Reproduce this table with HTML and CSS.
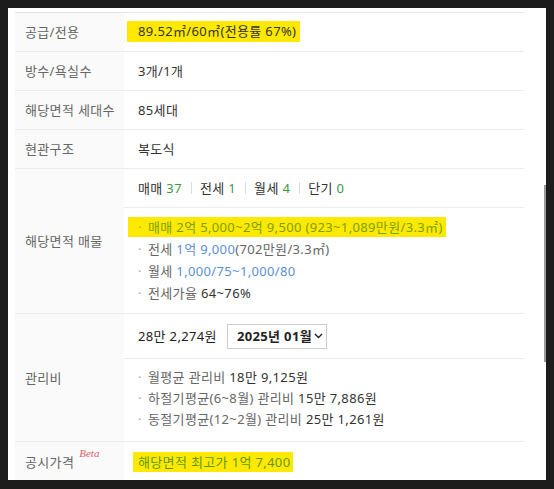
FILE: index.html
```html
<!DOCTYPE html>
<html lang="ko">
<head>
<meta charset="utf-8">
<link rel="stylesheet" href="styles.css">
</head>
<body>
<div class="panel">
  <table class="info">
    <tr>
      <th>공급/전용</th>
      <td><span class="hl hl-area">89.52㎡/60㎡(전용률 67%)</span></td>
    </tr>
    <tr>
      <th>방수/욕실수</th>
      <td>3개/1개</td>
    </tr>
    <tr>
      <th>해당면적 세대수</th>
      <td>85세대</td>
    </tr>
    <tr>
      <th>현관구조</th>
      <td>복도식</td>
    </tr>
    <tr>
      <th>해당면적 매물</th>
      <td class="multi">
        <div class="sub counts">
          <span>매매 <em class="g">37</em></span><i class="sep"></i>
          <span>전세 <em class="g">1</em></span><i class="sep"></i>
          <span>월세 <em class="g">4</em></span><i class="sep"></i>
          <span>단기 <em class="g">0</em></span>
        </div>
        <ul class="list deals">
          <li><span class="hl hl-deal"><span class="dot">·</span>매매 2억 5,000~2억 9,500 (923~1,089만원/3.3㎡)</span></li>
          <li><span class="dot">·</span>전세 <span class="b">1억 9,000</span>(702만원/3.3㎡)</li>
          <li><span class="dot">·</span>월세 <span class="b">1,000/75~1,000/80</span></li>
          <li><span class="dot">·</span>전세가율 <span class="dk">64~76%</span></li>
        </ul>
      </td>
    </tr>
    <tr>
      <th>관리비</th>
      <td class="multi">
        <div class="sub fee">
          <span class="fee-total">28만 2,274원</span>
          <span class="select">2025년 01월<svg class="chev" width="9" height="6" viewBox="0 0 9 6"><path d="M1 1 L4.5 4.5 L8 1" fill="none" stroke="#222" stroke-width="1.4"/></svg></span>
        </div>
        <ul class="list fees">
          <li><span class="dot">·</span>월평균 관리비 <span class="dk">18만 9,125원</span></li>
          <li><span class="dot">·</span>하절기평균(6~8월) 관리비 <span class="dk">15만 7,886원</span></li>
          <li><span class="dot">·</span>동절기평균(12~2월) 관리비 <span class="dk">25만 1,261원</span></li>
        </ul>
      </td>
    </tr>
    <tr class="last">
      <th>공시가격<sup class="beta">Beta</sup></th>
      <td><span class="hl hl-price">해당면적 최고가 1억 7,400</span></td>
    </tr>
  </table>
  <div class="thumb"></div>
</div>
</body>
</html>
```

FILE: styles.css
```css
html, body {
  margin: 0;
  padding: 0;
}
body {
  background: #1c1c1c;
  font-family: "Noto Sans", "Noto Sans CJK KR", sans-serif;
  font-size: 13px;
  letter-spacing: 0.35px;
  color: #333;
  height: 489px;
  overflow: hidden;
}
.panel {
  position: relative;
  margin: 8px 0 0 8px;
  width: 538px;
  height: 472px;
  background: #fff;
  box-sizing: border-box;
  padding: 4px 0 0 7px;
  overflow: hidden;
}
.info {
  border-collapse: collapse;
  width: 509px;
  border-top: 1px solid #e6e6e6;
}
.info tr {
  border-bottom: 1px solid #ececec;
}
.info th {
  width: 99px;
  height: 38px;
  padding: 0 0 0 10px;
  background: #fafafa;
  color: #666;
  font-weight: normal;
  text-align: left;
  vertical-align: middle;
  white-space: nowrap;
  line-height: 20px;
}
.info td {
  padding: 0 0 0 14px;
  height: 38px;
  vertical-align: middle;
  line-height: 20px;
  color: #333;
}
.info td.multi {
  padding: 0;
}
.info tr.last th,
.info tr.last td {
  height: 40px;
}
.sub {
  display: flex;
  align-items: center;
  padding-left: 14px;
  border-bottom: 1px solid #ececec;
}
.counts {
  height: 38px;
}
.counts em {
  font-style: normal;
}
.g {
  color: #3a9a44;
}
.b {
  color: #5b8fd4;
}
.dk {
  color: #333;
}
.sep {
  display: inline-block;
  width: 1px;
  height: 12px;
  background: #dcdcdc;
  margin: 0 8px 0 9px;
}
.list {
  list-style: none;
  margin: 0;
  padding: 0 0 0 14px;
  color: #666;
}
.deals {
  padding-top: 8px;
  padding-bottom: 9px;
}
.deals li {
  line-height: 22px;
  height: 22px;
}
.fees {
  padding-top: 8px;
  padding-bottom: 11px;
}
.fees li {
  line-height: 21px;
  height: 21px;
}
.dot {
  display: inline-block;
  width: 10px;
  color: #aaa;
}
.hl {
  background: #ffe900;
  display: inline-block;
}
.hl-area {
  margin-left: -11px;
  padding: 0 4px 0 11px;
  line-height: 21px;
  position: relative;
  top: -1px;
  color: #333;
}
.hl-deal {
  margin-left: -10px;
  padding: 0 3px 0 10px;
  line-height: 20px;
  color: #79a000;
}
.hl-deal .dot {
  color: #b5b000;
}
.hl-price {
  margin-left: -5px;
  padding: 0 3px 0 5px;
  line-height: 20px;
  color: #5f9a10;
}
.fee {
  height: 44px;
}
.fee-total {
  color: #222;
}
.select {
  display: inline-flex;
  align-items: center;
  height: 23px;
  margin-left: 10px;
  padding: 0 3px 0 9px;
  border: 1px solid #ccc;
  font-weight: bold;
  color: #222;
}
.chev {
  margin-left: 2px;
}
.beta {
  font-family: "Liberation Serif", serif;
  font-style: italic;
  font-size: 11px;
  letter-spacing: 0;
  color: #e05a6a;
  vertical-align: top;
  position: relative;
  top: -4px;
  margin-left: 5px;
  line-height: 11px;
}
.thumb {
  position: absolute;
  left: 536px;
  top: 177px;
  width: 2px;
  height: 177px;
  background: #9a9a9a;
}
```
